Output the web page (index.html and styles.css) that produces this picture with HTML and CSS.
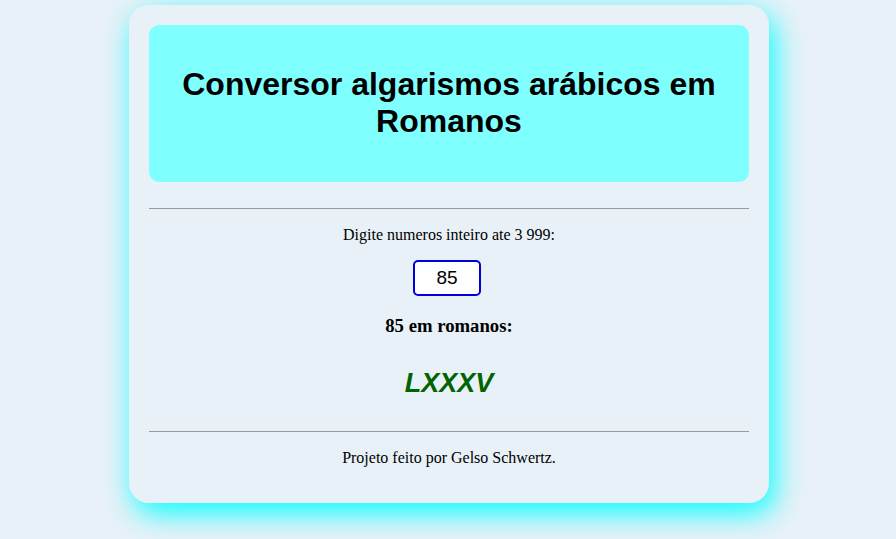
FILE: index.html
```html
<!DOCTYPE html>
<html lang="pt">
<head>
<meta charset="utf-8">
<title>Conversor</title>
<link rel="stylesheet" href="styles.css">
</head>
<body>
<main class="card">
  <header class="head">
    <h1 class="title">Conversor algarismos arábicos em Romanos</h1>
  </header>
  <hr class="rule rule-top">
  <section class="content">
    <p class="label">Digite numeros inteiro ate 3 999:</p>
    <input class="num" type="text" value="85">
    <h3 class="sub">85 em romanos:</h3>
    <p class="roman">LXXXV</p>
  </section>
  <hr class="rule">
  <footer class="foot">
    <p class="credit">Projeto feito por Gelso Schwertz.</p>
  </footer>
</main>
</body>
</html>
```
FILE: styles.css
```css
html {
  background: #e9f1f8;
  min-height: 100%;
}
body {
  margin: 0;
  padding: 5px 0 40px;
  background: #e9f1f8;
  font-family: "Liberation Serif", "Times New Roman", serif;
  font-size: 16px;
  color: #000;
}
.card {
  width: 600px;
  margin: 0 auto;
  padding: 20px;
  background: #e9f1f8;
  border-radius: 20px;
  box-shadow: 5px 10px 30px #00ffff;
  position: relative;
  left: 1px;
}
.head {
  background: #80ffff;
  border-radius: 10px;
  padding: 20px 20px;
  text-align: center;
}
.title {
  font-family: "Liberation Sans", Arial, sans-serif;
  font-size: 32px;
  font-weight: bold;
  margin: 21px 0 22px;
  line-height: 37px;
}
.rule {
  border: none;
  border-top: 1px solid #999;
  margin: 0;
}
.rule-top {
  margin-top: 26px;
}
.content {
  text-align: center;
  display: flex;
  flex-direction: column;
  align-items: center;
}
.label {
  margin: 17px 0 16px;
  line-height: 18px;
}
.num {
  width: 68px;
  height: 36px;
  box-sizing: border-box;
  border: 2px solid #0000dd;
  border-radius: 5px;
  background: #fff;
  font-family: "Liberation Sans", Arial, sans-serif;
  font-size: 19px;
  text-align: center;
  padding: 0;
  margin-right: 4px;
  color: #000;
}
.sub {
  font-size: 18.72px;
  font-weight: bold;
  margin: 19px 0 0;
  line-height: 22px;
}
.roman {
  font-family: "Liberation Sans", Arial, sans-serif;
  font-size: 27px;
  font-weight: bold;
  font-style: italic;
  color: #006400;
  margin: 30px 0 32px;
  line-height: 32px;
}
.foot {
  text-align: center;
}
.credit {
  margin: 17px 0 16px;
  line-height: 18px;
}
```
